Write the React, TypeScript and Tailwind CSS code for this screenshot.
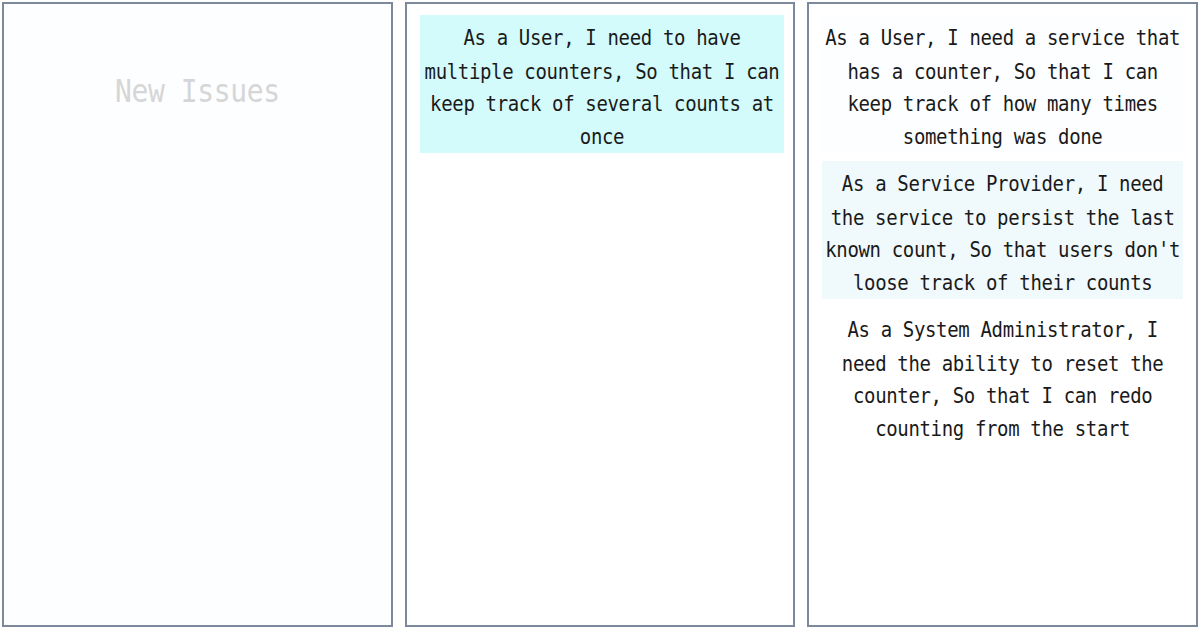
const stories = [
  {
    text: "As a User, I need a service that has a counter, So that I can keep track of how many times something was done",
    bg: "bg-[#fdfeff]",
  },
  {
    text: "As a Service Provider, I need the service to persist the last known count, So that users don't loose track of their counts",
    bg: "bg-[#f0f9fb]",
  },
  {
    text: "As a System Administrator, I need the ability to reset the counter, So that I can redo counting from the start",
    bg: "bg-white",
  },
]

function Card({ text, bg }: { text: string; bg: string }) {
  return (
    <div className={`${bg} h-[138px] pt-[6px]`}>
      <p className="origin-top scale-y-[1.15] text-center text-[19px] leading-[28.7px] tracking-[-0.35px] text-[#1a1a1a]">
        {text}
      </p>
    </div>
  )
}

export default function App() {
  return (
    <div
      className="h-[630px] w-[1200px] bg-white px-[2px] pt-[2px] pb-[3px]"
      style={{ fontFamily: '"DejaVu Sans Mono", "Liberation Mono", monospace' }}
    >
      <div className="grid h-full grid-cols-3 gap-[12px]">
        <div className="border-2 border-[#7c889b] bg-[#fdfeff] pt-[68px] text-center">
          <h2 className="origin-top scale-y-[1.15] text-[28px] leading-[34px] tracking-[-0.4px] text-[#d6d6d6]">
            New Issues
          </h2>
        </div>

        <div className="border-2 border-[#7c889b] bg-white pt-[11px] pr-[9px] pl-[13px]">
          <Card
            text="As a User, I need to have multiple counters, So that I can keep track of several counts at once"
            bg="bg-[#d3fbfb]"
          />
        </div>

        <div className="flex flex-col gap-[8px] border-2 border-[#7c889b] bg-white px-[13px] pt-[11px]">
          {stories.map((s) => (
            <Card key={s.text} text={s.text} bg={s.bg} />
          ))}
        </div>
      </div>
    </div>
  )
}
